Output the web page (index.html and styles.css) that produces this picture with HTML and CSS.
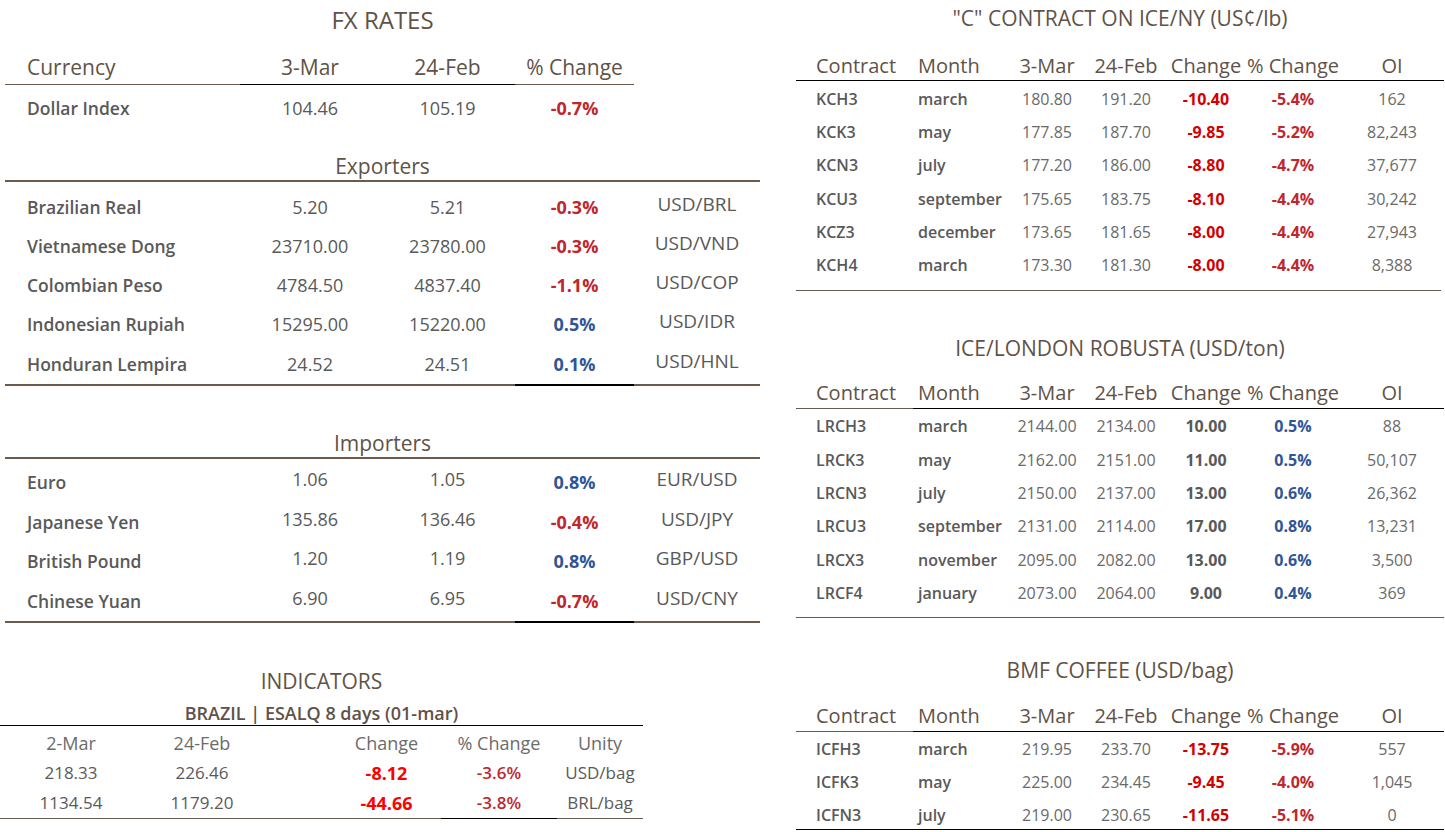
FILE: index.html
```html
<!DOCTYPE html>
<html lang="en">
<head>
<meta charset="utf-8">
<title>Market Report</title>
<link rel="stylesheet" href="styles.css">
</head>
<body>
<div class="page">
  <div class="left">
    <section class="fx">
      <h2 class="title fx-title">FX RATES</h2>
      <div class="fx-grid fx-head">
        <div class="c name bb-brown">Currency</div>
        <div class="c bb-black">3-Mar</div>
        <div class="c bb-black">24-Feb</div>
        <div class="c bb-brown">% Change</div>
        <div class="c"></div>
      </div>
      <div class="fx-grid fx-dollar">
        <div class="c name">Dollar Index</div>
        <div class="c val">104.46</div>
        <div class="c val">105.19</div>
        <div class="c pct neg">-0.7%</div>
        <div class="c"></div>
      </div>

      <h3 class="group exp-h">Exporters</h3>
      <div class="grp exp">
        <div class="fx-grid fx-row">
          <div class="c name">Brazilian Real</div><div class="c val">5.20</div><div class="c val">5.21</div><div class="c pct neg">-0.3%</div><div class="c pair">USD/BRL</div>
        </div>
        <div class="fx-grid fx-row">
          <div class="c name">Vietnamese Dong</div><div class="c val">23710.00</div><div class="c val">23780.00</div><div class="c pct neg">-0.3%</div><div class="c pair">USD/VND</div>
        </div>
        <div class="fx-grid fx-row">
          <div class="c name">Colombian Peso</div><div class="c val">4784.50</div><div class="c val">4837.40</div><div class="c pct neg">-1.1%</div><div class="c pair">USD/COP</div>
        </div>
        <div class="fx-grid fx-row">
          <div class="c name">Indonesian Rupiah</div><div class="c val">15295.00</div><div class="c val">15220.00</div><div class="c pct pos">0.5%</div><div class="c pair">USD/IDR</div>
        </div>
        <div class="fx-grid fx-row last">
          <div class="c name">Honduran Lempira</div><div class="c val">24.52</div><div class="c val">24.51</div><div class="c pct pos">0.1%</div><div class="c pair">USD/HNL</div>
        </div>
      </div>

      <h3 class="group imp-h">Importers</h3>
      <div class="grp imp">
        <div class="fx-grid fx-row">
          <div class="c name">Euro</div><div class="c val up">1.06</div><div class="c val up">1.05</div><div class="c pct pos">0.8%</div><div class="c pair">EUR/USD</div>
        </div>
        <div class="fx-grid fx-row">
          <div class="c name">Japanese Yen</div><div class="c val up">135.86</div><div class="c val up">136.46</div><div class="c pct neg">-0.4%</div><div class="c pair">USD/JPY</div>
        </div>
        <div class="fx-grid fx-row">
          <div class="c name">British Pound</div><div class="c val up">1.20</div><div class="c val up">1.19</div><div class="c pct pos">0.8%</div><div class="c pair">GBP/USD</div>
        </div>
        <div class="fx-grid fx-row last">
          <div class="c name">Chinese Yuan</div><div class="c val up">6.90</div><div class="c val up">6.95</div><div class="c pct neg">-0.7%</div><div class="c pair">USD/CNY</div>
        </div>
      </div>
    </section>

    <section class="ind">
      <h2 class="title ind-title">INDICATORS</h2>
      <div class="ind-sub">BRAZIL | ESALQ 8 days (01-mar)</div>
      <div class="ind-table">
        <div class="ind-grid ind-head">
          <div class="c">2-Mar</div><div class="c">24-Feb</div><div class="c chg">Change</div><div class="c">% Change</div><div class="c">Unity</div>
        </div>
        <div class="ind-grid">
          <div class="c">218.33</div><div class="c">226.46</div><div class="c chg bright">-8.12</div><div class="c ipct">-3.6%</div><div class="c">USD/bag</div>
        </div>
        <div class="ind-grid last">
          <div class="c">1134.54</div><div class="c">1179.20</div><div class="c chg bright">-44.66</div><div class="c ipct">-3.8%</div><div class="c">BRL/bag</div>
        </div>
      </div>
    </section>
  </div>

  <div class="right">
    <section class="fut s1">
      <h2 class="title">"C" CONTRACT ON ICE/NY (US¢/lb)</h2>
      <div class="fg fhead">
        <div class="c ctr">Contract</div><div class="c mon">Month</div><div class="c">3-Mar</div><div class="c">24-Feb</div><div class="c">Change</div><div class="c">% Change</div><div class="c">OI</div>
      </div>
      <div class="frows">
        <div class="fg fr"><div class="c ctr">KCH3</div><div class="c mon">march</div><div class="c v">180.80</div><div class="c v">191.20</div><div class="c ch red">-10.40</div><div class="c pc neg">-5.4%</div><div class="c v">162</div></div>
        <div class="fg fr"><div class="c ctr">KCK3</div><div class="c mon">may</div><div class="c v">177.85</div><div class="c v">187.70</div><div class="c ch red">-9.85</div><div class="c pc neg">-5.2%</div><div class="c v">82,243</div></div>
        <div class="fg fr"><div class="c ctr">KCN3</div><div class="c mon">july</div><div class="c v">177.20</div><div class="c v">186.00</div><div class="c ch red">-8.80</div><div class="c pc neg">-4.7%</div><div class="c v">37,677</div></div>
        <div class="fg fr"><div class="c ctr">KCU3</div><div class="c mon">september</div><div class="c v">175.65</div><div class="c v">183.75</div><div class="c ch red">-8.10</div><div class="c pc neg">-4.4%</div><div class="c v">30,242</div></div>
        <div class="fg fr"><div class="c ctr">KCZ3</div><div class="c mon">december</div><div class="c v">173.65</div><div class="c v">181.65</div><div class="c ch red">-8.00</div><div class="c pc neg">-4.4%</div><div class="c v">27,943</div></div>
        <div class="fg fr"><div class="c ctr">KCH4</div><div class="c mon">march</div><div class="c v">173.30</div><div class="c v">181.30</div><div class="c ch red">-8.00</div><div class="c pc neg">-4.4%</div><div class="c v">8,388</div></div>
      </div>
    </section>

    <section class="fut s2">
      <h2 class="title">ICE/LONDON ROBUSTA (USD/ton)</h2>
      <div class="fg fhead split">
        <div class="c ctr">Contract</div><div class="c mon">Month</div><div class="c">3-Mar</div><div class="c">24-Feb</div><div class="c">Change</div><div class="c">% Change</div><div class="c">OI</div>
      </div>
      <div class="frows">
        <div class="fg fr"><div class="c ctr">LRCH3</div><div class="c mon">march</div><div class="c v">2144.00</div><div class="c v">2134.00</div><div class="c ch dark">10.00</div><div class="c pc pos">0.5%</div><div class="c v">88</div></div>
        <div class="fg fr"><div class="c ctr">LRCK3</div><div class="c mon">may</div><div class="c v">2162.00</div><div class="c v">2151.00</div><div class="c ch dark">11.00</div><div class="c pc pos">0.5%</div><div class="c v">50,107</div></div>
        <div class="fg fr"><div class="c ctr">LRCN3</div><div class="c mon">july</div><div class="c v">2150.00</div><div class="c v">2137.00</div><div class="c ch dark">13.00</div><div class="c pc pos">0.6%</div><div class="c v">26,362</div></div>
        <div class="fg fr"><div class="c ctr">LRCU3</div><div class="c mon">september</div><div class="c v">2131.00</div><div class="c v">2114.00</div><div class="c ch dark">17.00</div><div class="c pc pos">0.8%</div><div class="c v">13,231</div></div>
        <div class="fg fr"><div class="c ctr">LRCX3</div><div class="c mon">november</div><div class="c v">2095.00</div><div class="c v">2082.00</div><div class="c ch dark">13.00</div><div class="c pc pos">0.6%</div><div class="c v">3,500</div></div>
        <div class="fg fr"><div class="c ctr">LRCF4</div><div class="c mon">january</div><div class="c v">2073.00</div><div class="c v">2064.00</div><div class="c ch dark">9.00</div><div class="c pc pos">0.4%</div><div class="c v">369</div></div>
      </div>
    </section>

    <section class="fut s3">
      <h2 class="title">BMF COFFEE (USD/bag)</h2>
      <div class="fg fhead split">
        <div class="c ctr">Contract</div><div class="c mon">Month</div><div class="c">3-Mar</div><div class="c">24-Feb</div><div class="c">Change</div><div class="c">% Change</div><div class="c">OI</div>
      </div>
      <div class="frows">
        <div class="fg fr"><div class="c ctr">ICFH3</div><div class="c mon">march</div><div class="c v">219.95</div><div class="c v">233.70</div><div class="c ch red">-13.75</div><div class="c pc neg">-5.9%</div><div class="c v">557</div></div>
        <div class="fg fr"><div class="c ctr">ICFK3</div><div class="c mon">may</div><div class="c v">225.00</div><div class="c v">234.45</div><div class="c ch red">-9.45</div><div class="c pc neg">-4.0%</div><div class="c v">1,045</div></div>
        <div class="fg fr"><div class="c ctr">ICFN3</div><div class="c mon">july</div><div class="c v">219.00</div><div class="c v">230.65</div><div class="c ch red">-11.65</div><div class="c pc neg">-5.1%</div><div class="c v">0</div></div>
      </div>
    </section>
  </div>
</div>
</body>
</html>
```

FILE: styles.css
```css
* { box-sizing: border-box; }
html, body { margin: 0; padding: 0; background: #ffffff; }
body {
  font-family: "Open Sans", "Liberation Sans", sans-serif;
  color: #595959;
  width: 1445px;
  height: 832px;
  overflow: hidden;
}
h2, h3 { margin: 0; font-weight: 500; }

.page {
  display: grid;
  grid-template-columns: 796px 648px;
}

.title {
  color: #5f5248;
  font-size: 21px;
  font-weight: 500;
  line-height: 28px;
  text-align: center;
  white-space: nowrap;
}

/* ---------- FX RATES ---------- */
.fx { margin-left: 5px; width: 755px; }
.fx-title { font-size: 24px; padding-top: 6px; height: 34px; }

.fx-grid {
  display: grid;
  grid-template-columns: 235px 140px 135px 119px 126px;
}
.c {
  display: flex;
  justify-content: center;
  align-items: flex-start;
  white-space: nowrap;
}
.fx-grid .name { justify-content: flex-start; padding-left: 22px; }

.fx-head { height: 51px; }
.fx-head .c {
  align-items: flex-end;
  color: #5f5248;
  font-size: 21px;
  font-weight: 500;
  line-height: 28px;
  padding-bottom: 3px;
}
.bb-brown { border-bottom: 1px solid #6b5b4e; }
.bb-black { border-bottom: 1px solid #000000; }

.fx-dollar { height: 43px; }
.fx-dollar .c { line-height: 40px; padding-top: 3px; }

.name { font-weight: 600; font-size: 17.5px; color: #595959; }
.val { font-size: 18px; color: #595959; }
.pct { font-size: 18px; font-weight: 700; }
.pair { font-size: 19px; color: #595959; }
.neg { color: #c0272d; }
.pos { color: #2f5597; }

.group {
  color: #5f5248;
  font-size: 21px;
  line-height: 28px;
  text-align: center;
}
.exp-h { height: 52px; padding-top: 24px; }
.imp-h { height: 75px; padding-top: 47px; }

.grp { border-top: 2px solid #6b5b4e; }
.exp { padding-top: 5.5px; }
.imp { padding-top: 4.3px; }

.exp .fx-row { height: 39.25px; }
.exp .fx-row .c { line-height: 39.25px; }
.exp .fx-row.last { height: 37.5px; }
.imp .fx-row { height: 39.5px; }
.imp .fx-row .c { line-height: 39.5px; }
.imp .fx-row.last { height: 37.2px; }

.fx-row.last .c { border-bottom: 2px solid #6b5b4e; }
.fx-row.last .c.pct { border-bottom-color: #000000; }

.fx-row .pair { padding-bottom: 6px; line-height: 33px !important; }
.fx-row .up { line-height: 33px !important; }

/* ---------- INDICATORS ---------- */
.ind { margin-top: 48px; width: 643px; }
.ind-title { font-size: 21px; }
.ind-sub {
  text-align: center;
  font-size: 18px;
  font-weight: 600;
  color: #5f5248;
  line-height: 24px;
  padding-top: 6px;
}
.ind-table { border-top: 1px solid #000000; padding-top: 2px; }
.ind-grid {
  display: grid;
  grid-template-columns: 142px 120px 179px 116px 86px;
  height: 30px;
}
.ind-grid .c { line-height: 30px; font-size: 17px; color: #5a5a5a; }
.ind-head .c { font-size: 18px; color: #6b6b6b; }
.ind-grid .chg { padding-left: 70px; }
.ind-grid .bright { color: #ff0000; font-weight: 700; font-size: 18px; }
.ind-grid .ipct { color: #c0272d; font-weight: 600; }
.ind-grid.last { height: 29px; }
.ind-grid.last .c { border-bottom: 1px solid #6b5b4e; }
.ind-grid.last .c:nth-child(4) { border-bottom-color: #000000; }

/* ---------- FUTURES ---------- */
.fg {
  display: grid;
  grid-template-columns: 117px 95px 78px 80px 80px 94px 104px;
}
.fg .ctr { justify-content: flex-start; padding-left: 20px; }
.fg .mon { justify-content: flex-start; padding-left: 5px; }

.fhead .c {
  align-items: flex-end;
  font-size: 20px;
  font-weight: 500;
  line-height: 27px;
  color: #5f5248;
  padding-bottom: 1.5px;
  border-bottom: 1px solid #000000;
}
.fhead.split .c:first-child { border-bottom-color: #6b5b4e; }

.s1 .title { padding-top: 4px; }
.s1 .fhead { height: 49px; }
.s2 { margin-top: 43px; }
.s2 .fhead { height: 47px; }
.s3 { margin-top: 38px; }
.s3 .fhead { height: 48px; }

.frows { border-bottom: 1px solid #6b5b4e; }
.s1 .frows { padding-top: 1.5px; padding-bottom: 7px; width: 645px; }
.s2 .frows { padding-top: 1.3px; padding-bottom: 6.3px; }
.s3 .frows { padding-top: 1px; border-bottom-color: #000000; }

.fr { height: 33.4px; }
.fr .c { line-height: 33.4px; font-size: 16px; }
.s3 .fr { height: 33px; }
.s3 .fr .c { line-height: 33px; }
.s3 .fr:last-child { height: 30px; }

.fr .ctr, .fr .mon { font-weight: 600; color: #595959; }
.fr .v { color: #6a6a6a; }
.fr .ch { font-weight: 700; }
.fr .red { color: #d40000; }
.fr .dark { color: #595959; }
.fr .pc { font-weight: 700; }
```
